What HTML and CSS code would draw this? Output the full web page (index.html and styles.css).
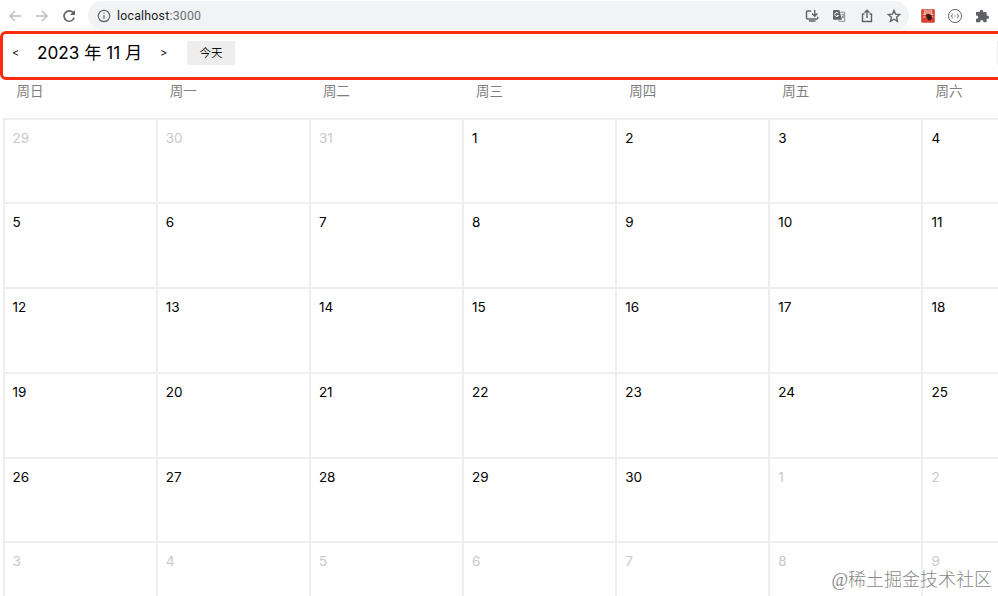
FILE: index.html
```html
<!DOCTYPE html>
<html lang="zh-CN">
<head>
<meta charset="utf-8">
<title>Calendar</title>
<link rel="stylesheet" href="styles.css">
</head>
<body>
<div class="browser-bar">
  <div class="nav-icons">
    <svg class="icon faded" viewBox="0 0 16 16"><path d="M14 8H3M8 3L3 8l5 5"/></svg>
    <svg class="icon faded" viewBox="0 0 16 16"><path d="M2 8h11M8 3l5 5-5 5"/></svg>
    <svg class="icon reload" viewBox="0 0 16 16"><path d="M13.2 9.6A5.2 5.2 0 1 1 12.3 4.8L13 6"/><path class="solid" d="M14 2v5H9z"/></svg>
  </div>
  <div class="address">
    <svg class="icon info" viewBox="0 0 16 16"><circle cx="8" cy="8" r="5.7"/><path d="M8 7.3v3.8M8 4.7v1.4"/></svg>
    <span class="url">localhost<span class="port">:3000</span></span>
    <div class="address-actions">
      <svg class="icon" viewBox="0 0 16 16"><path d="M7.2 3H3.5Q2.5 3 2.5 4v6q0 1 1 1h9.2q1 0 1-1V8.8M5 13h6.5M10.7 2v6M8 5.6l2.7 2.7 2.7-2.7"/></svg>
      <svg class="icon" viewBox="0 0 16 16"><path class="solid" d="M2.5 2h5.8l2.7 9.7H3.2Q2 11.7 2 10.5v-8z"/><path class="thin soft" d="M9 4.2h4.7v9.2H8.2l-.5-1.7M10.5 6.7h2.8M12 5.6v1.1M13 7q-.5 2.5-2.6 3.4M11 8l2 2.5"/><path class="light" d="M7.3 5.2A2 2 0 1 0 7.5 7.5H6"/></svg>
      <svg class="icon" viewBox="0 0 16 16"><path d="M5.5 6H3.5v7.5h9V6h-2M8 10V2.5M5.5 4.7L8 2.2l2.5 2.5"/></svg>
      <svg class="icon" viewBox="0 0 16 16"><path d="M8 2.5l1.6 3.7 4 .4-3 2.7.9 4L8 11.2l-3.5 2.1.9-4-3-2.7 4-.4z"/></svg>
    </div>
  </div>
  <div class="extensions">
    <svg class="icon" viewBox="0 0 16 16"><rect class="red" x="1.2" y="1.2" width="13.6" height="13.6" rx="1"/><path class="pink" d="M4.5 2.8h2.6v2.4H4.5zM9 2.8h2.6v2.4H9zM2.8 6.3h3M10.5 6.3h2.8M3.2 9.5l2-1M11.3 8.3l2 1"/><path class="dark" d="M6 6.8l3-.8 2.4 1.5.8 2.4-1.5 2-2 .6L6.9 10z"/></svg>
    <svg class="icon" viewBox="0 0 16 16"><circle class="thin" cx="8" cy="8" r="6.5"/><path class="thin" d="M5.8 6Q5 6 5 7t-.8 1Q5 8 5 9t.8 1M10.2 6q.8 0 .8 1t.8 1q-.8 0-.8 1t-.8 1M7 8h.5M8.5 8H9"/></svg>
    <svg class="icon" viewBox="0 0 16 16"><path class="solid" d="M2 4h3.7V3.4a1.7 1.7 0 0 1 3.4 0V4h3.5v3.6h.7a1.7 1.7 0 0 1 0 3.4h-.7v3.3H9.4v-.6a1.6 1.6 0 0 0-3.2 0v.6H2v-3.6h.7a1.6 1.6 0 0 0 0-3.2H2z"/></svg>
  </div>
</div>

<header class="calendar-header">
  <span class="arrow">&lt;</span>
  <h1 class="month">2023 年 11 月</h1>
  <span class="arrow">&gt;</span>
  <button class="today">今天</button>
  <span class="edge"></span>
</header>

<main class="calendar">
  <div class="week-list"><span>周日</span><span>周一</span><span>周二</span><span>周三</span><span>周四</span><span>周五</span><span>周六</span></div>
  <div class="days">
    <div class="day other">29</div><div class="day other">30</div><div class="day other">31</div><div class="day">1</div><div class="day">2</div><div class="day">3</div><div class="day">4</div>
    <div class="day">5</div><div class="day">6</div><div class="day">7</div><div class="day">8</div><div class="day">9</div><div class="day">10</div><div class="day">11</div>
    <div class="day">12</div><div class="day">13</div><div class="day">14</div><div class="day">15</div><div class="day">16</div><div class="day">17</div><div class="day">18</div>
    <div class="day">19</div><div class="day">20</div><div class="day">21</div><div class="day">22</div><div class="day">23</div><div class="day">24</div><div class="day">25</div>
    <div class="day">26</div><div class="day">27</div><div class="day">28</div><div class="day">29</div><div class="day">30</div><div class="day other">1</div><div class="day other">2</div>
    <div class="day other">3</div><div class="day other">4</div><div class="day other">5</div><div class="day other">6</div><div class="day other">7</div><div class="day other">8</div><div class="day other">9</div>
  </div>
</main>
<div class="watermark">@稀土掘金技术社区</div>
</body>
</html>
```
FILE: styles.css
```css
* { box-sizing: border-box; }
html { overflow: hidden; }
body {
  position: relative;
  margin: 0;
  width: 998px;
  height: 596px;
  overflow: hidden;
  background: #fff;
  color: #111;
  font-family: Inter, "Noto Sans CJK SC", sans-serif;
}
.browser-bar {
  display: flex;
  align-items: center;
  height: 31px;
  padding-left: 7px;
}
.icon {
  flex: none;
  width: 16px;
  height: 16px;
  fill: none;
  stroke: #5f6368;
  stroke-width: 1.4;
}
.faded { stroke: #b9bbbe; }
.reload { stroke-width: 1.6; }
.info { stroke-width: 1.2; }
.solid { fill: #5f6368; stroke: none; }
.thin { stroke-width: 1; }
.soft { stroke: #8d9094; }
.light { stroke: #fff; stroke-width: 1; }
.red { fill: #d8402f; stroke: none; }
.pink { stroke: #f6b9ae; stroke-width: 1.2; }
.dark { fill: #3a1712; stroke: none; }
.nav-icons { display: flex; gap: 11px; width: 81px; }
.address {
  display: flex;
  align-items: center;
  width: 821px;
  height: 29px;
  padding: 0 7px 0 8px;
  border-radius: 15px;
  background: #f1f3f4;
}
.url {
  margin-left: 5px;
  font: 12.3px/16px Roboto, sans-serif;
  letter-spacing: 0.24px;
  color: #202124;
}
.port { color: #6b6f73; }
.address-actions { display: flex; gap: 11.3px; margin-left: auto; }
.extensions { display: flex; gap: 11px; margin-left: 11px; }
.calendar-header {
  display: flex;
  align-items: flex-start;
  width: 1010px;
  height: 49px;
  padding: 7px 0 0 9px;
  border: 3px solid #fb2b10;
  border-radius: 6px;
}
.arrow { width: 7px; font-size: 11px; line-height: 25px; }
.month {
  width: 105px;
  margin: 0 18px;
  font-size: 17.2px;
  font-weight: 400;
  line-height: 24px;
  white-space: nowrap;
  color: #000;
}
.today {
  width: 48px;
  height: 24px;
  margin-left: 20px;
  padding: 0 0 2px;
  border: 0;
  background: #eee;
  color: #111;
  font: 11.5px/22px "Noto Sans CJK SC", sans-serif;
}
.edge { width: 10px; height: 24px; margin-left: 762px; background: #eee; }
.calendar { width: 1075px; padding-left: 3px; }
.week-list {
  display: grid;
  grid-template-columns: repeat(7, 153.15px);
  height: 38px;
  color: #7e7e7e;
  font-size: 13.5px;
  line-height: 22px;
}
.week-list span { padding-left: 13.6px; }
.days {
  display: grid;
  grid-template-columns: repeat(7, 153.15px);
  grid-auto-rows: 84.75px;
  margin: -0.4px 0 0 -0.4px;
}
.day {
  padding: 10px 0 0 8px;
  border: solid #eee;
  border-width: 2px 0 0 2px;
  font-size: 13.5px;
  line-height: 16px;
  color: #000;
}
.other { color: #c8c8c8; }
.watermark {
  position: absolute;
  right: 6px;
  bottom: 4px;
  color: #888;
  font: 300 18px/24px "Liberation Serif", "Noto Sans CJK SC", sans-serif;
  text-shadow: 0 0 1px #fff;
  white-space: nowrap;
}
```
